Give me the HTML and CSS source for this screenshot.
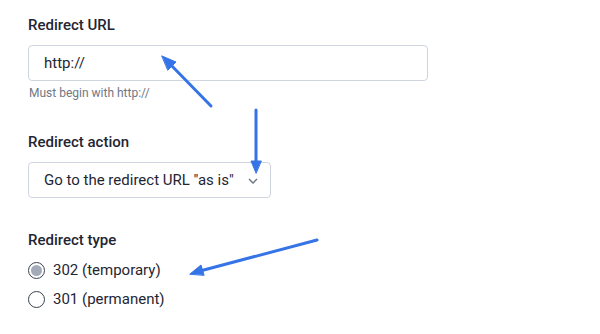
FILE: index.html
```html
<!DOCTYPE html>
<html lang="en">
<head>
    <meta charset="UTF-8">
    <title>Redirect settings</title>
    <link rel="stylesheet" href="styles.css">
</head>
<body>
    <form class="redirect-form">
        <div class="field">
            <label class="field-label" for="redirectUrl">Redirect URL</label>
            <input class="text-input" id="redirectUrl" type="text" value="http://">
            <p class="field-hint">Must begin with http://</p>
        </div>

        <div class="field">
            <label class="field-label" for="redirectAction">Redirect action</label>
            <div class="select-box" id="redirectAction">
                <span class="select-value">Go to the redirect URL "as is"</span>
                <svg class="select-chevron" width="10" height="6" viewBox="0 0 10 6">
                    <path d="M1 1l4 4 4-4" fill="none" stroke="#6b7480" stroke-width="1.4"/>
                </svg>
            </div>
        </div>

        <div class="field">
            <span class="field-label">Redirect type</span>
            <label class="radio-row">
                <span class="radio checked"></span>
                302 (temporary)
            </label>
            <label class="radio-row">
                <span class="radio"></span>
                301 (permanent)
            </label>
        </div>
    </form>

    <!-- annotation arrows drawn over the form -->
    <svg class="arrows" width="600" height="334" viewBox="0 0 600 334">
        <g stroke="#3574e6" stroke-width="3" stroke-linecap="round" fill="#3574e6">
            <line x1="211" y1="106" x2="170" y2="64"/>
            <polygon points="162,56 176,62 168,70" stroke-width="1" stroke-linejoin="round"/>
            <line x1="256" y1="110" x2="256" y2="164"/>
            <polygon points="256,173 251,161 261,161" stroke-width="1" stroke-linejoin="round"/>
            <line x1="317" y1="240" x2="200" y2="271"/>
            <polygon points="190,274 201,265 204,275" stroke-width="1" stroke-linejoin="round"/>
        </g>
    </svg>
</body>
</html>
```

FILE: styles.css
```css
body {
    margin: 0;
    background: #ffffff;
    font-family: Roboto, 'Liberation Sans', sans-serif;
    color: #1f2633;
}

.redirect-form {
    padding: 15px 0 0 28px;
    width: 400px;
}

.field {
    display: flex;
    flex-direction: column;
    align-items: flex-start;
    margin-bottom: 32px;
}

.field-label {
    font-size: 15px;
    font-weight: 500;
    line-height: 20px;
    margin-bottom: 10px;
}

.text-input {
    box-sizing: border-box;
    width: 400px;
    height: 36px;
    padding: 0 15px;
    border: 1px solid #cfd5df;
    border-radius: 4px;
    font-family: inherit;
    font-size: 15px;
    color: #1f2633;
    outline: none;
}

.field-hint {
    margin: 5px 0 0 1px;
    font-size: 12px;
    line-height: 14px;
    color: #6f7785;
}

.select-box {
    box-sizing: border-box;
    width: 243px;
    height: 36px;
    padding: 0 12px 0 15px;
    border: 1px solid #cfd5df;
    border-radius: 4px;
    display: flex;
    align-items: center;
    justify-content: space-between;
    font-size: 15px;
}

.select-chevron {
    margin-top: 2px;
}

.radio-row {
    display: flex;
    align-items: center;
    gap: 8px;
    font-size: 15px;
    line-height: 20px;
    margin-bottom: 9px;
}

.field-label + .radio-row {
    margin-top: 0;
}

.radio {
    box-sizing: border-box;
    width: 17px;
    height: 17px;
    border: 1.5px solid #3a414d;
    border-radius: 50%;
    display: flex;
    align-items: center;
    justify-content: center;
}

.radio.checked::after {
    content: "";
    width: 11px;
    height: 11px;
    border-radius: 50%;
    background: #a3abb9;
}

.arrows {
    position: absolute;
    left: 0;
    top: 0;
    pointer-events: none;
}
```
